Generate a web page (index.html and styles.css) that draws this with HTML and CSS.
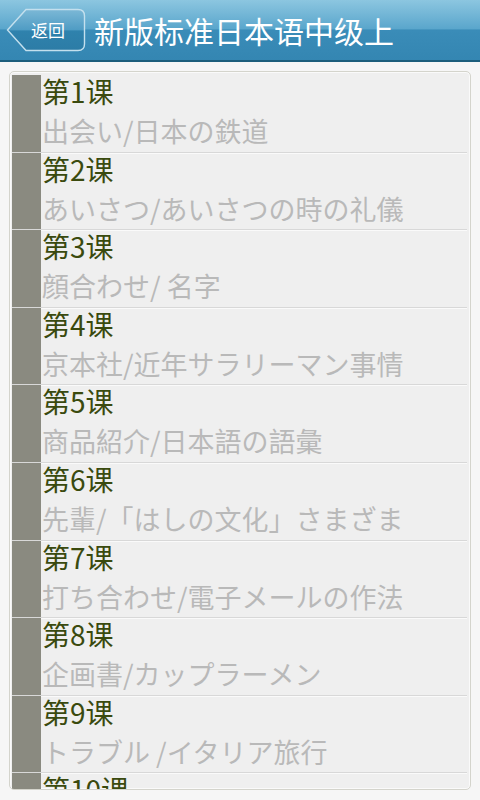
FILE: index.html
```html
<!DOCTYPE html>
<html lang="zh">
<head>
<meta charset="utf-8">
<link rel="stylesheet" href="styles.css">
</head>
<body>
<div class="app">
  <header class="topbar">
    <div class="back">
      <svg class="back-shape" width="80" height="44" viewBox="0 0 80 44">
        <defs>
          <linearGradient id="bg" x1="0" y1="0" x2="0" y2="1">
            <stop offset="0" stop-color="#7cb8d6"/>
            <stop offset="0.5" stop-color="#4f9cc4"/>
            <stop offset="0.52" stop-color="#2f82ad"/>
            <stop offset="1" stop-color="#2c7ca6"/>
          </linearGradient>
        </defs>
        <path d="M1.5 22 L20 1.5 H72 Q78.5 1.5 78.5 8 V36 Q78.5 42.5 72 42.5 H20 Z" fill="url(#bg)" stroke="#c4e0ee" stroke-width="1.4"/>
      </svg>
      <span class="back-label">返回</span>
    </div>
    <h1 class="title">新版标准日本语中级上</h1>
  </header>
  <main class="content">
    <ul class="list">
      <li class="row"><span class="mark"></span><div class="text"><div class="lesson">第1课</div><div class="sub">出会い/日本の鉄道</div></div></li>
      <li class="row"><span class="mark"></span><div class="text"><div class="lesson">第2课</div><div class="sub">あいさつ/あいさつの時の礼儀</div></div></li>
      <li class="row"><span class="mark"></span><div class="text"><div class="lesson">第3课</div><div class="sub">顔合わせ/ 名字</div></div></li>
      <li class="row"><span class="mark"></span><div class="text"><div class="lesson">第4课</div><div class="sub">京本社/近年サラリーマン事情</div></div></li>
      <li class="row"><span class="mark"></span><div class="text"><div class="lesson">第5课</div><div class="sub">商品紹介/日本語の語彙</div></div></li>
      <li class="row"><span class="mark"></span><div class="text"><div class="lesson">第6课</div><div class="sub">先輩/「はしの文化」さまざま</div></div></li>
      <li class="row"><span class="mark"></span><div class="text"><div class="lesson">第7课</div><div class="sub">打ち合わせ/電子メールの作法</div></div></li>
      <li class="row"><span class="mark"></span><div class="text"><div class="lesson">第8课</div><div class="sub">企画書/カップラーメン</div></div></li>
      <li class="row"><span class="mark"></span><div class="text"><div class="lesson">第9课</div><div class="sub">トラブル /イタリア旅行</div></div></li>
      <li class="row"><span class="mark"></span><div class="text"><div class="lesson">第10课</div><div class="sub">国際交流</div></div></li>
    </ul>
  </main>
</div>
</body>
</html>
```
FILE: styles.css
```css
* { box-sizing: border-box; }
html, body { margin: 0; padding: 0; }
body {
  width: 480px;
  height: 800px;
  overflow: hidden;
  background: #f6f6f6;
  font-family: "Noto Sans CJK SC", "Noto Sans CJK JP", sans-serif;
}
.app { display: flex; flex-direction: column; height: 800px; }
.topbar {
  height: 62px;
  flex: none;
  display: flex;
  align-items: center;
  background: linear-gradient(#8cc6e0 0%, #5aa6cc 48%, #3a8cb8 50%, #3486b2 100%);
  border-bottom: 2px solid #1d5e7c;
  padding-left: 6px;
}
.back {
  position: relative;
  width: 80px;
  height: 44px;
  flex: none;
}
.back-shape { display: block; }
.back-label {
  position: absolute;
  left: 14px;
  right: 10px;
  top: 0;
  height: 44px;
  line-height: 44px;
  text-align: center;
  color: #fff;
  font-size: 17px;
  font-family: "Noto Sans CJK SC", sans-serif;
}
.title {
  margin: 0 0 0 8px;
  color: #fff;
  font-size: 30px;
  font-weight: normal;
  line-height: 1.4;
}
.content {
  flex: 1;
  padding: 9px 9px 10px 9px;
}
.list {
  list-style: none;
  margin: 0;
  padding: 3px 3px 0 2px;
  height: 719px;
  overflow: hidden;
  background: #efefef;
  border: 1px solid #d4d4cc;
  border-radius: 5px;
  box-shadow: inset 0 0 0 1px #fafafa;
}
.row {
  display: flex;
  height: 77.6px;
  border-bottom: 1px solid #d8d8d8;
  box-shadow: 0 1px 0 #fafafa;
}
.mark {
  width: 29px;
  flex: none;
  background: #8a8a80;
}
.text {
  padding-left: 1px;
  margin-top: -4px;
  min-width: 0;
}
.lesson {
  font-size: 28px;
  line-height: 40px;
  color: #3a4a0e;
  font-family: "Noto Sans CJK SC", sans-serif;
}
.sub {
  font-size: 27px;
  line-height: 40px;
  color: #b9b9b9;
  white-space: nowrap;
  font-family: "Noto Sans CJK JP", sans-serif;
}
```
